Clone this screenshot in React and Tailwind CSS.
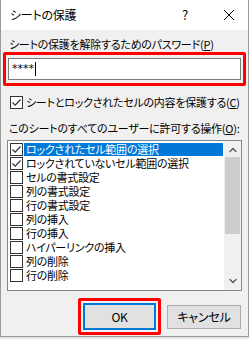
import { ChevronUp, ChevronDown } from 'lucide-react';

const ITEMS = [
  { label: 'ロックされたセル範囲の選択', checked: true, selected: true },
  { label: 'ロックされていないセル範囲の選択', checked: true },
  { label: 'セルの書式設定' },
  { label: '列の書式設定' },
  { label: '行の書式設定' },
  { label: '列の挿入' },
  { label: '行の挿入' },
  { label: 'ハイパーリンクの挿入' },
  { label: '列の削除' },
  { label: '行の削除' },
];

const CheckBox = ({ checked }) => (
  <div className="w-[13px] h-[13px] shrink-0 border border-[#333333] bg-white flex items-center justify-center">
    {checked && (
      <svg width="11" height="11" viewBox="0 0 11 11">
        <path d="M1.5 5.5 L4.2 8.2 L9.5 2.5" fill="none" stroke="#333333" strokeWidth="1.2" />
      </svg>
    )}
  </div>
);

const App = () => {
  return (
    <div className="w-[249px] h-[339px] bg-[#e6e6e6] font-['Noto_Sans_CJK_JP',sans-serif] text-[11px] leading-[14px] tracking-[-0.25px] text-black whitespace-nowrap [font-feature-settings:'palt']">
      <div className="h-[337px] bg-[#f0f0f0] border-x border-b border-[#9a9a9a] flex flex-col">
        {/* Title bar */}
        <div className="h-[30px] bg-white flex items-center pl-[9px] shrink-0 text-[12px]">
          <span className="flex-1">シートの保護</span>
          <span className="w-[14px] text-center mr-[31px] text-[13px]">?</span>
          <svg width="12" height="12" viewBox="0 0 12 12" className="mr-[13px]">
            <path d="M1 1 L11 11 M11 1 L1 11" stroke="#000" strokeWidth="1" />
          </svg>
        </div>

        <div className="pl-[8px] mt-[7px]">
          シートの保護を解除するためのパスワード(<span className="underline">P</span>)
        </div>

        {/* Password */}
        <div className="mx-[2px] mt-[1px] border-[3px] border-[#ff0000] rounded-[2px] px-[2px] py-[3px]">
          <div className="h-[22px] bg-white border border-[#7a7a7a] flex items-center pl-[3px]">
            <span className="text-[11px] tracking-[0px] font-['DejaVu_Sans',sans-serif]">****</span>
            <span className="w-px h-[14px] bg-black ml-[1px]" />
          </div>
        </div>

        <div className="flex items-center gap-[3px] pl-[9px] mt-[9px]">
          <CheckBox checked />
          <span>シートとロックされたセルの内容を保護する(<span className="underline">C</span>)</span>
        </div>

        <div className="pl-[8px] mt-[12px]">
          このシートのすべてのユーザーに許可する操作(<span className="underline">O</span>):
        </div>

        {/* List */}
        <div className="mx-[6px] mt-[5px] h-[151px] border border-[#828790] bg-white flex overflow-hidden">
          <div className="flex-1 pt-[1px] overflow-hidden">
            {ITEMS.map(item => (
              <div key={item.label} className="h-[14px] flex items-center pl-[2px]">
                <CheckBox checked={item.checked} />
                <span className={`ml-[1px] pl-[2px] flex-1 h-[13px] leading-[13px] ${item.selected ? 'bg-[#0078d7] text-white' : ''}`}>
                  {item.label}
                </span>
              </div>
            ))}
          </div>
          <div className="w-[17px] ml-[1px] bg-[#f0f0f0] flex flex-col items-center">
            <ChevronUp size={12} strokeWidth={3} className="text-[#606060] mt-[3px]" />
            <div className="w-[15px] h-[77px] bg-[#cdcdcd] mt-[1px]" />
            <div className="flex-1" />
            <ChevronDown size={12} strokeWidth={3} className="text-[#606060] mb-[3px]" />
          </div>
        </div>

        {/* Buttons */}
        <div className="flex items-start mt-[7px] pl-[77px] text-[12px]">
          <div className="border-[3px] border-[#ff0000] rounded-[2px] p-[2px]">
            <div className="w-[73px] h-[27px] border-2 border-[#0078d7] bg-[#e1e1e1] flex items-center justify-center">
              OK
            </div>
          </div>
          <div className="ml-[6px] mt-[7px] w-[74px] h-[24px] border border-[#adadad] bg-[#e1e1e1] flex items-center justify-center">
            キャンセル
          </div>
        </div>
      </div>
    </div>
  );
};

export default App;
